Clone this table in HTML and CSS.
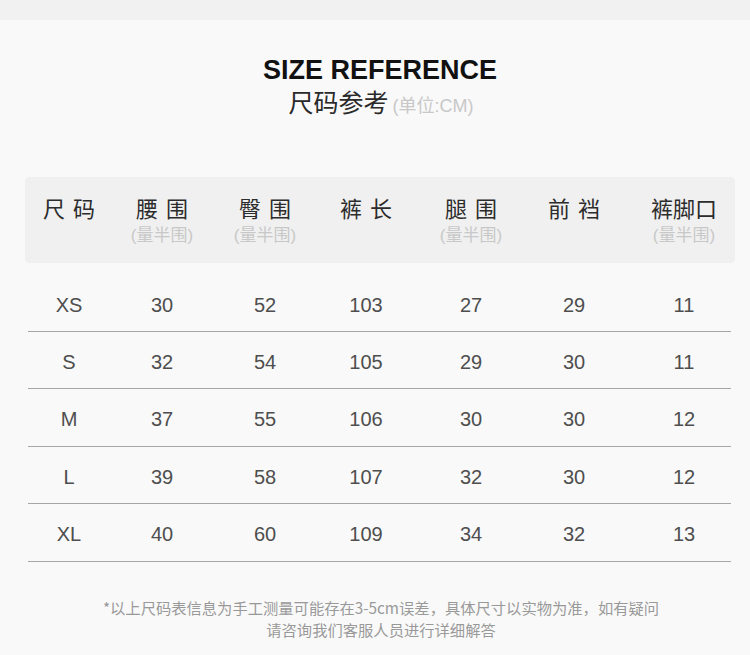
FILE: index.html
```html
<!DOCTYPE html>
<html lang="zh">
<head>
<meta charset="utf-8">
<link rel="stylesheet" href="styles.css">
</head>
<body>
<div class="topbar"></div>
<div class="page">
  <div class="title">SIZE REFERENCE</div>
  <div class="subtitle">尺码参考<span class="unit">(单位:CM)</span></div>

  <div class="thead">
    <div class="grid">
      <div class="hc"><div class="hm sp">尺码</div></div>
      <div class="hc"><div class="hm sp">腰围</div><div class="hs">(量半围)</div></div>
      <div class="hc"><div class="hm sp">臀围</div><div class="hs">(量半围)</div></div>
      <div class="hc"><div class="hm sp">裤长</div></div>
      <div class="hc"><div class="hm sp">腿围</div><div class="hs">(量半围)</div></div>
      <div class="hc"><div class="hm sp">前裆</div></div>
      <div class="hc last"><div class="hm">裤脚口</div><div class="hs">(量半围)</div></div>
    </div>
  </div>

  <div class="rows">
    <div class="grid row"><div>XS</div><div>30</div><div>52</div><div>103</div><div>27</div><div>29</div><div class="last">11</div></div>
    <div class="grid row"><div>S</div><div>32</div><div>54</div><div>105</div><div>29</div><div>30</div><div class="last">11</div></div>
    <div class="grid row"><div>M</div><div>37</div><div>55</div><div>106</div><div>30</div><div>30</div><div class="last">12</div></div>
    <div class="grid row"><div>L</div><div>39</div><div>58</div><div>107</div><div>32</div><div>30</div><div class="last">12</div></div>
    <div class="grid row"><div>XL</div><div>40</div><div>60</div><div>109</div><div>34</div><div>32</div><div class="last">13</div></div>
  </div>

  <div class="note">
    <div>*以上尺码表信息为手工测量可能存在3-5cm误差，具体尺寸以实物为准，如有疑问</div>
    <div>请咨询我们客服人员进行详细解答</div>
  </div>
</div>
</body>
</html>
```

FILE: styles.css
```css
html, body {
  margin: 0;
  padding: 0;
  background: #f9f9f9;
  font-family: "Liberation Sans", "Noto Sans CJK SC", sans-serif;
  width: 750px;
  height: 655px;
  overflow: hidden;
}

.topbar {
  height: 20px;
  background: #f1f1f1;
}

.page {
  display: flex;
  flex-direction: column;
}

.title {
  margin-top: 34px;
  text-align: center;
  font-family: "Liberation Sans", sans-serif;
  font-weight: bold;
  font-size: 27px;
  line-height: 32px;
  color: #111;
  padding-left: 10px;
}

.subtitle {
  margin-top: 0;
  text-align: center;
  font-family: "Noto Sans CJK SC", sans-serif;
  font-size: 25px;
  line-height: 30px;
  color: #2a2a2a;
  padding-left: 12px;
}

.unit {
  font-family: "Liberation Sans", "Noto Sans CJK SC", sans-serif;
  font-size: 18px;
  color: #c8c8c8;
  margin-left: 4px;
}

.grid {
  display: grid;
  grid-template-columns: 82px 104px 102px 100px 110px 96px 109px;
  width: 703px;
}

.grid > div {
  text-align: center;
}

.grid > .last {
  padding-left: 15px;
}

.thead {
  margin-top: 56px;
  margin-left: 25px;
  width: 710px;
  height: 86px;
  box-sizing: border-box;
  padding-left: 3px;
  padding-top: 17px;
  background: #f0f0f0;
  border-radius: 4px;
}

.hc {
  display: flex;
  flex-direction: column;
  align-items: center;
}

.hm {
  font-family: "Noto Sans CJK SC", sans-serif;
  font-size: 22px;
  line-height: 26px;
  color: #2c2c2c;
}

.hm.sp {
  letter-spacing: 8px;
  margin-right: -8px;
}

.hs {
  font-family: "Liberation Sans", "Noto Sans CJK SC", sans-serif;
  font-size: 17px;
  line-height: 24px;
  margin-top: 4px;
  color: #c8c8c8;
}

.rows {
  margin-top: 11px;
  margin-left: 28px;
}

.row {
  box-sizing: border-box;
  height: 57.5px;
  padding-top: 18px;
  border-bottom: 1px solid #a6a6a6;
  font-size: 20px;
  line-height: 24px;
  color: #4e4e4e;
}

.row:first-child {
  padding-top: 19px;
}

.note {
  margin-top: 34px;
  text-align: center;
  font-family: "Noto Sans CJK SC", sans-serif;
  font-size: 15.3px;
  line-height: 22px;
  color: #999;
  padding-left: 12px;
}
```
